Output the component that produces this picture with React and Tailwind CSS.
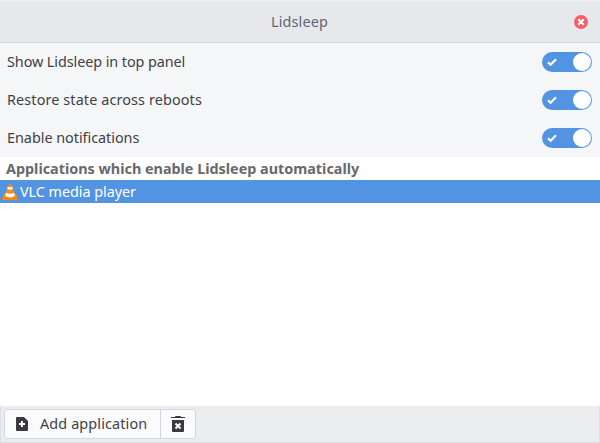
import React from 'react';

const settings = [
  { label: 'Show Lidsleep in top panel', spacing: 'tracking-[-0.08px]' },
  { label: 'Restore state across reboots', spacing: 'tracking-[0.12px]' },
  { label: 'Enable notifications', spacing: 'tracking-[-0.03px]' },
];

function Switch() {
  return (
    <button role="switch" aria-checked="true" className="flex h-5 w-[50px] items-center justify-between rounded-full bg-[#5294e2] pl-[5px] pr-px">
      <svg width="10" height="8" viewBox="0 0 10 8" fill="none">
        <path d="M1 4.2 3.6 6.7 9 1.2" stroke="white" strokeWidth="2.2" />
      </svg>
      <span className="h-[18px] w-[18px] rounded-full bg-white" />
    </button>
  );
}

function Cone() {
  return (
    <svg width="16" height="16" viewBox="0 0 16 16" className="shrink-0">
      <path d="M2.2 9.6h11.6L16 15.2q0 .8-.8.8H.8Q0 16 0 15.2z" fill="#ff8800" />
      <path d="M6.5.4Q8-.4 9.5.4l3.3 10.8Q11.8 13.4 8 13.4t-4.8-2.2z" fill="#ff8b0a" />
      <path d="M5.8 2.8Q8 3.8 10.2 2.8l.7 2.3Q8 6.4 5.1 5.1z" fill="#ffffff" />
      <path d="M4 8.7Q8 10.7 12 8.7l.8 2.5Q11.8 13.3 8 13.3t-4.8-2.1z" fill="#ffffff" />
    </svg>
  );
}

export default function App() {
  return (
    <div className="flex h-[443px] w-[600px] flex-col overflow-hidden bg-[#f5f6f7] font-['Noto_Sans',sans-serif] text-[14.4px] leading-5 text-[#3f4147]">
      <header className="grid h-[43px] shrink-0 grid-cols-[1fr_auto_1fr] items-center border-b border-t border-b-[#d4d5da] border-t-[#eff0f2] bg-[#e7e8eb] pr-3">
        <span />
        <h1 className="pl-[11px] tracking-[0.15px] text-[#5f6575]">Lidsleep</h1>
        <button aria-label="Close" className="justify-self-end">
          <svg width="14" height="14" viewBox="0 0 14 14">
            <circle cx="7" cy="7" r="7" fill="#f46067" />
            <path d="m4.3 4.3 5.4 5.4m0-5.4-5.4 5.4" stroke="white" strokeWidth="2.2" />
          </svg>
        </button>
      </header>
      <section className="shrink-0">
        {settings.map(({ label, spacing }) => (
          <div key={label} className="flex h-[38px] items-center justify-between pl-[7px] pr-2">
            <span className={spacing}>{label}</span>
            <Switch />
          </div>
        ))}
      </section>
      <main className="min-h-0 flex-1 bg-white">
        <h2 className="flex h-[23px] items-center pl-1.5 font-bold tracking-[-0.01px] text-[#67696e]">
          <span>Applications which enable Lidsleep automatically</span>
        </h2>
        <div className="flex h-[23px] items-center gap-0.5 bg-[#5294e2] pl-0.5 text-white">
          <Cone />
          <span className="tracking-[-0.05px]">VLC media player</span>
        </div>
      </main>
      <footer className="flex h-[37px] shrink-0 border-x border-b border-[#dcdfe3] bg-[#ebedef] pl-[3px] pt-[3px]">
        <div className="flex h-[30px] w-[192px] overflow-hidden rounded-[3px] border border-[#cfd6e6] bg-[#fbfbfc]">
          <button className="flex w-[156px] items-center gap-3 border-r border-[#cfd6e6] pl-[11px]">
            <svg width="12" height="14" viewBox="0 0 12 14" className="shrink-0">
              <path d="M1 0h7l4 4v9q0 1-1 1H1q-1 0-1-1V1q0-1 1-1z" fill="#3b3b3d" />
              <path d="M6 4v6M3 7h6" stroke="white" strokeWidth="2" />
            </svg>
            <span className="whitespace-nowrap tracking-[0.13px]">Add application</span>
          </button>
          <button aria-label="Remove application" className="flex flex-1 items-center justify-center">
            <svg width="14" height="16" viewBox="0 0 14 16">
              <path d="M0 2V1h4q0-1 1-1h4q1 0 1 1h4v1zM1 4h12v11q0 1-1 1H2q-1 0-1-1z" fill="#3b3b3d" />
              <path d="m4.5 7.5 5 5m0-5-5 5" stroke="white" strokeWidth="2" />
            </svg>
          </button>
        </div>
      </footer>
    </div>
  );
}
